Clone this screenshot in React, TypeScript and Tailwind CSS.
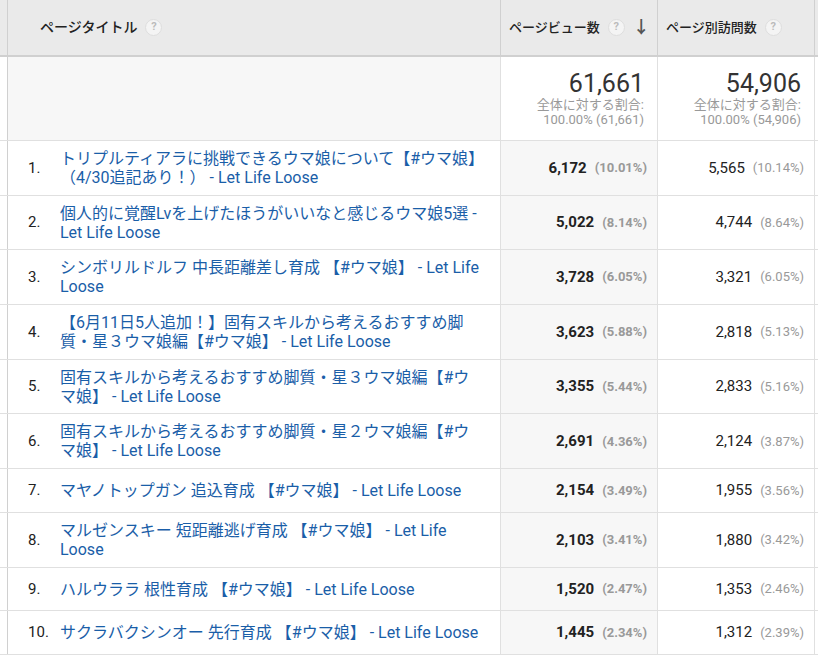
const rows: [string, string, string, string, string, boolean][] = [
  ["トリプルティアラに挑戦できるウマ娘について【#ウマ娘】（4/30追記あり！）", "6,172", "(10.01%)", "5,565", "(10.14%)", true],
  ["個人的に覚醒Lvを上げたほうがいいなと感じるウマ娘5選", "5,022", "(8.14%)", "4,744", "(8.64%)", true],
  ["シンボリルドルフ 中長距離差し育成 【#ウマ娘】", "3,728", "(6.05%)", "3,321", "(6.05%)", true],
  ["【6月11日5人追加！】固有スキルから考えるおすすめ脚質・星３ウマ娘編【#ウマ娘】", "3,623", "(5.88%)", "2,818", "(5.13%)", true],
  ["固有スキルから考えるおすすめ脚質・星３ウマ娘編【#ウマ娘】", "3,355", "(5.44%)", "2,833", "(5.16%)", true],
  ["固有スキルから考えるおすすめ脚質・星２ウマ娘編【#ウマ娘】", "2,691", "(4.36%)", "2,124", "(3.87%)", true],
  ["マヤノトップガン 追込育成 【#ウマ娘】", "2,154", "(3.49%)", "1,955", "(3.56%)", false],
  ["マルゼンスキー 短距離逃げ育成 【#ウマ娘】", "2,103", "(3.41%)", "1,880", "(3.42%)", true],
  ["ハルウララ 根性育成 【#ウマ娘】", "1,520", "(2.47%)", "1,353", "(2.46%)", false],
  ["サクラバクシンオー 先行育成 【#ウマ娘】", "1,445", "(2.34%)", "1,312", "(2.39%)", false],
];

function Q() {
  return (
    <span className="inline-flex items-center justify-center w-[17px] h-[17px] rounded-full bg-[#f4f4f4] border border-[#dedede] text-[11px] text-[#bbb] font-bold ml-[8px]">?</span>
  );
}

export default function App() {
  return (
    <div className="w-[818px] h-[659px] overflow-hidden bg-white text-[#222]" style={{ fontFamily: "Roboto, 'Noto Sans CJK JP', sans-serif" }}>
      <div className="flex h-[57px] bg-[#eaeaea] border-b-[2px] border-[#d0d0d0]">
        <div className="w-[8px] border-r border-[#d0d0d0]" />
        <div className="w-[493px] border-r border-[#d0d0d0] flex items-center pl-[32px] text-[14px] font-medium text-[#222]">ページタイトル<Q /></div>
        <div className="w-[157px] border-r border-[#d0d0d0] flex items-center pl-[8px] text-[13px] font-medium">ページビュー数<Q /><span className="ml-[8px] text-[#555] text-[17px] font-bold">↓</span></div>
        <div className="w-[157px] border-r border-[#d0d0d0] flex items-center pl-[8px] text-[13px] font-medium">ページ別訪問数<Q /></div>
      </div>
      <div className="flex h-[84px] border-b border-[#e0e0e0]">
        <div className="w-[8px] border-r border-[#d0d0d0]" />
        <div className="w-[493px] border-r border-[#e0e0e0] bg-[#f7f7f7]" />
        {[["61,661"], ["54,906"]].map(([v], i) => (
          <div key={i} className="w-[157px] border-r border-[#e0e0e0] flex flex-col items-end pr-[13px] pt-[14px]">
            <div className="text-[25px] leading-[26px] text-[#333]">{v}</div>
            <div className="text-[13px] leading-[15px] text-[#999]">全体に対する割合:</div>
            <div className="text-[13px] leading-[15px] text-[#999]">100.00% ({v})</div>
          </div>
        ))}
      </div>
      {rows.map((r, i) => (
        <div key={i} className={`flex border-b border-[#e0e0e0] ${i === 6 ? "h-[44px]" : r[5] ? "h-[54.7px]" : "h-[43.5px]"}`}>
          <div className="w-[8px] border-r border-[#d0d0d0]" />
          <div className="w-[493px] border-r border-[#e0e0e0] flex items-center">
            <div className="w-[52px] pl-[20px] text-[15px]">{i + 1}.</div>
            <div className="w-[420px] text-[16px] leading-[19px] text-[#1a5ea8]">{r[0]}<span className="ml-[4px]">- Let Life Loose</span></div>
          </div>
          <div className="w-[157px] border-r border-[#e0e0e0] bg-[#f7f7f7] flex items-center justify-end pr-[10px] gap-[8px] text-[15px]">
            <span className="font-bold text-[#222]">{r[1]}</span>
            <span className="font-bold text-[13px] text-[#999]">{r[2]}</span>
          </div>
          <div className="w-[157px] border-r border-[#e0e0e0] flex items-center justify-end pr-[10px] gap-[8px] text-[15px]">
            <span className="text-[#222]">{r[3]}</span>
            <span className="text-[13px] text-[#999]">{r[4]}</span>
          </div>
        </div>
      ))}
    </div>
  );
}
